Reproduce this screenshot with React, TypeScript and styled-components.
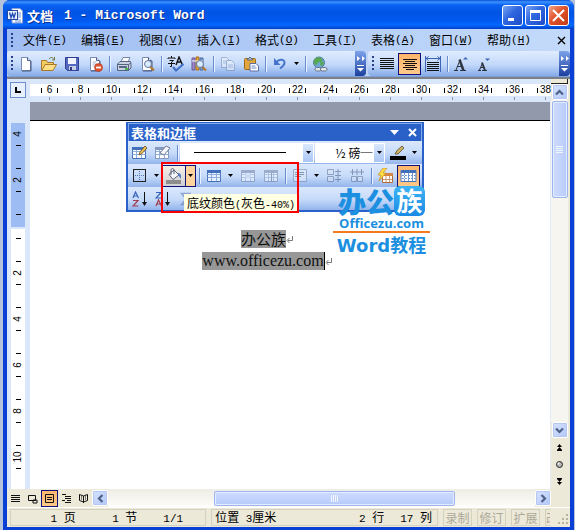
import React from "react";
import styled, { createGlobalStyle, css } from "styled-components";

const song = `"Noto Sans CJK SC", sans-serif`;
const mono = `"Liberation Mono", monospace`;

const GlobalStyle = createGlobalStyle`
  * { box-sizing: border-box; }
  body { margin: 0; background: #b4c2dc; font-family: ${song}; font-size: 12px; color: #000; }
  button, select { font: inherit; color: inherit; margin: 0; padding: 0; border: 0; background: none; }
  button { display: inline-flex; align-items: center; justify-content: center; flex: none; }
  svg { display: block; flex: none; }
`;

/* ---------- window frame ---------- */

const Desktop = styled.div`
  display: flex;
  min-height: 100vh;
  padding: 0 1px 0 3px;
`;

const Window = styled.main`
  display: flex;
  flex: 1;
  flex-direction: column;
  min-width: 0;
  border: solid #0a3fd6;
  border-width: 0 4px 3px;
  border-radius: 7px 7px 0 0;
  background: #0a3fd6;
`;

const TitleBar = styled.header`
  display: flex;
  align-items: center;
  height: 29px;
  margin: 0 -4px;
  padding: 2px 5px 0 4px;
  border-radius: 7px 7px 0 0;
  background: linear-gradient(#0a50d8 0, #3c93ff 2px, #0a62f2 5px, #0054e3 12px, #0058ee 20px, #0468ff 25px, #0040c8 29px);
`;

const Title = styled.h1`
  display: flex;
  flex: 1;
  align-items: center;
  gap: 11px;
  margin: 0 0 0 4px;
  font-size: 13px;
  line-height: 18px;
  font-weight: 700;
  color: #fff;
  text-shadow: 1px 1px 0 #0a2f8c;
  white-space: pre;
`;

const TitleLatin = styled.span`
  font-family: ${mono};
`;

const CaptionButton = styled.button<{ $close?: boolean }>`
  width: 21px;
  height: 21px;
  margin-left: 2px;
  border: 1px solid #fff;
  border-radius: 3px;
  background: ${(p) =>
    p.$close
      ? "linear-gradient(135deg, #f0a488, #e0532c 45%, #c23a14)"
      : "linear-gradient(135deg, #7ba4f4, #2f66e0 45%, #1c4cc8)"};
`;

/* ---------- menu and toolbars ---------- */

const Latin = styled.span<{ $small?: boolean }>`
  font-family: ${mono};
  font-size: ${(p) => (p.$small ? "10px" : "11px")};
`;

const MenuBar = styled.nav`
  display: flex;
  align-items: center;
  height: 22px;
  padding-left: 4px;
  background: linear-gradient(90deg, #9fbdf2, #c3dafa);
`;

const MenuButton = styled.button`
  justify-content: flex-start;
  width: 58px;
  height: 20px;
  line-height: 18px;
  white-space: nowrap;
`;

const Grip = styled.span`
  flex: none;
  width: 2px;
  height: 14px;
  margin-right: 10px;
  background: repeating-linear-gradient(#27408b 0 2px, transparent 2px 4px);
`;

const ToolGrip = styled(Grip)`
  height: 15px;
  margin-right: 1px;
`;

const Spacer = styled.span<{ $fixed?: boolean }>`
  flex: ${(p) => (p.$fixed ? "0 0 24px" : "1")};
`;

const ToolbarRow = styled.div`
  display: flex;
  gap: 2px;
  height: 26px;
  background: #bcd2f7;
  border-bottom: 1px solid #7f9fd8;
`;

const Toolbar = styled.div<{ $grow?: boolean }>`
  display: flex;
  flex: ${(p) => (p.$grow ? "1" : "none")};
  align-items: center;
  padding-left: 4px;
  border-radius: 4px;
  background: linear-gradient(#e0ecfe, #c2d8fa 55%, #86abe8);
`;

const selected = css`
  background: linear-gradient(#ffb56a, #ffc98a);
  outline: 1px solid #10107a;
  outline-offset: -1px;
`;

const ToolButton = styled.button<{ $on?: boolean; $dim?: boolean }>`
  width: 23px;
  height: 22px;
  ${(p) => p.$on && selected}
  svg {
    opacity: ${(p) => (p.$dim ? 0.5 : 1)};
  }
`;

const ArrowButton = styled.button`
  width: 11px;
  height: 22px;
`;

const Separator = styled.span`
  flex: none;
  width: 1px;
  height: 16px;
  margin: 0 2px 0 3px;
  background: #6a8ccb;
  box-shadow: 1px 0 0 #e9f2ff;
`;

const OverflowButton = styled.button`
  flex-direction: column;
  gap: 4px;
  width: 11px;
  height: 25px;
  border-radius: 0 4px 4px 0;
  background: linear-gradient(#7da3ea, #1c3f9e);
`;

/* ---------- document area ---------- */

const Workspace = styled.section`
  display: grid;
  flex: 1;
  grid-template-columns: 23px minmax(0, 1fr) 19px;
  grid-template-rows: 23px minmax(0, 1fr) 18px;
  border-top: 2px solid #7c8088;
  background: #dae6fa;
`;

const Corner = styled.div`
  display: flex;
  padding: 3px 4px 4px 3px;
`;

const TabStop = styled.button`
  width: 16px;
  height: 16px;
  border: 1px solid #6e8fcb;
  background: #e6effc;
`;

const RulerArea = styled.div`
  padding-top: 5px;
  overflow: hidden;
`;

const Ruler = styled.div`
  display: flex;
  height: 12px;
  padding-left: 4px;
  background: #fff;
`;

const RulerCell = styled.span`
  display: flex;
  flex: none;
  align-items: center;
  justify-content: space-between;
  width: 31px;
  height: 12px;
  padding: 0 7px;
  font: 10px/12px "Liberation Sans", sans-serif;
  &::before,
  &::after {
    content: "";
    width: 1px;
    height: 5px;
    background: #000;
  }
`;

const TabTicks = styled.div`
  height: 3px;
  margin: 1px 0 0 4px;
  background: repeating-linear-gradient(90deg, transparent 0 15px, #8b94a8 15px 16px, transparent 16px 31px);
`;

const SideRuler = styled.div`
  height: 0;
  min-height: 100%;
  margin: 0 5px 0 4px;
  padding-top: 21px;
  overflow: hidden;
`;

const SideZone = styled.div<{ $margin?: boolean }>`
  height: ${(p) => (p.$margin ? "104px" : "100%")};
  margin-bottom: 2px;
  overflow: hidden;
  background: ${(p) => (p.$margin ? "#9dbcf3" : "#fff")};
`;

const SideCell = styled.span<{ $cut?: "top" | "half" }>`
  display: flex;
  flex-direction: column;
  align-items: center;
  justify-content: space-between;
  height: 46px;
  margin-top: ${(p) => (p.$cut === "top" ? "-12px" : p.$cut === "half" ? "-25px" : "0")};
  padding: 11px 0;
  font: 10px/12px "Liberation Sans", sans-serif;
  &::before,
  &::after {
    content: "";
    width: 5px;
    height: 1px;
    background: #000;
  }
`;

const SideNumber = styled.span`
  height: 12px;
  transform: rotate(-90deg);
`;

const PageView = styled.div`
  position: relative;
  display: flex;
  flex-direction: column;
  background: #fff;
  border-right: 1px solid #e4ebf8;
`;

const PageGap = styled.div`
  height: 19px;
  background: #9299ab;
  border-bottom: 1px solid #000;
`;

const PageText = styled.article`
  display: flex;
  flex-direction: column;
  align-items: center;
  gap: 4px;
  padding: 109px 46px 0 0;
`;

const Line = styled.p<{ $latin?: boolean }>`
  display: flex;
  align-items: center;
  margin: 0;
  font-family: ${(p) => (p.$latin ? `"Liberation Serif", serif` : song)};
  font-size: ${(p) => (p.$latin ? "16px" : "15px")};
  line-height: 19px;
  color: #111;
`;

const Mark = styled.mark<{ $caret?: boolean }>`
  height: 18px;
  line-height: 18px;
  background: #979797;
  color: inherit;
  border-right: ${(p) => (p.$caret ? "1px solid #000" : "0")};
`;

/* ---------- scroll bars ---------- */

const VScroll = styled.div`
  display: flex;
  grid-row: 1 / 4;
  grid-column: 3;
  flex-direction: column;
  align-items: center;
  padding-right: 2px;
  background: #ece9d8;
`;

const SplitBox = styled.div`
  align-self: stretch;
  height: 5px;
  background: #ece9d8;
  border: solid #222;
  border-width: 0 1px 1px 0;
`;

const ScrollButton = styled.button`
  width: 16px;
  height: 16px;
  border: 1px solid #fff;
  border-radius: 2px;
  background: linear-gradient(135deg, #d6e2fe, #b2c7fa);
  box-shadow: inset 0 0 0 1px #b4c6f2;
`;

const VTrack = styled.div`
  display: flex;
  flex: 1;
  align-self: stretch;
  justify-content: center;
  padding-top: 1px;
  background: #f6f5ef;
`;

const Thumb = styled.div<{ $horizontal?: boolean }>`
  display: flex;
  align-items: center;
  justify-content: center;
  width: ${(p) => (p.$horizontal ? "60%" : "16px")};
  height: ${(p) => (p.$horizontal ? "15px" : "97px")};
  border: 1px solid #9db4ee;
  border-radius: 2px;
  background: ${(p) => (p.$horizontal ? "linear-gradient(#cddbff, #b7cafa)" : "linear-gradient(90deg, #cfdcff, #b7cafa)")};
  box-shadow: inset 0 0 0 1px #e4ecff;
`;

const BrowseButtons = styled.div`
  display: flex;
  flex-direction: column;
  justify-content: space-between;
  height: 69px;
  padding: 3px 0 20px;
`;

const BrowseButton = styled.button`
  width: 15px;
  height: 12px;
`;

const HBar = styled.div`
  display: flex;
  grid-column: 1 / 3;
  align-items: center;
  background: #ece9d8;
`;

const ViewButton = styled.button<{ $on?: boolean }>`
  width: 17px;
  height: 17px;
  ${(p) => p.$on && selected}
`;

const HTrack = styled.div`
  display: flex;
  flex: 1;
  align-items: center;
  justify-content: center;
  height: 18px;
  padding-left: 26px;
  background: linear-gradient(#eeede5, #fdfdfa);
`;

/* ---------- status bar ---------- */

const StatusBar = styled.footer`
  display: flex;
  align-items: center;
  gap: 5px;
  height: 20px;
  padding: 0 0 0 3px;
  border-top: 1px solid #fff;
  background: #ece9d8;
`;

const Panel = styled.div<{ $wide?: number; $dim?: boolean; $last?: boolean }>`
  display: flex;
  flex: ${(p) => (p.$wide ? `${p.$wide} 1 0` : p.$last ? "0 0 6px" : "0 0 29px")};
  gap: 16px;
  align-items: center;
  justify-content: ${(p) => (p.$dim ? (p.$last ? "flex-start" : "center") : "flex-end")};
  height: 17px;
  padding: ${(p) => (p.$dim ? "0" : "0 5px 0 3px")};
  overflow: hidden;
  border: 1px solid #d5d1bf;
  border-right-color: ${(p) => (p.$last ? "transparent" : "#d5d1bf")};
  color: ${(p) => (p.$dim ? "#aca899" : "#000")};
  line-height: 15px;
  white-space: pre;
`;

const Counters = styled(Panel)`
  gap: 0;
  padding-right: 22px;
`;

const Counter = styled.span<{ $short?: boolean }>`
  width: ${(p) => (p.$short ? "46px" : "62px")};
  text-align: right;
`;

/* ---------- floating palette ---------- */

const Palette = styled.section`
  position: absolute;
  top: 20px;
  left: 96px;
  width: 298px;
  border: 2px solid #2a61c9;
  border-top-width: 1px;
  background: #2a61c9;
`;

const PaletteTitle = styled.header`
  display: flex;
  align-items: center;
  height: 18px;
  padding-left: 2px;
  border: solid #86abea;
  border-width: 1px 1px 0;
  color: #fff;
`;

const PaletteHeading = styled.h2`
  flex: 1;
  margin: 0;
  font-size: 13px;
  line-height: 17px;
`;

const PaletteButton = styled.button`
  width: 18px;
  height: 16px;
`;

const PaletteRow = styled.div`
  display: flex;
  align-items: center;
  height: 23px;
  background: linear-gradient(#dbe8fd, #c5daf9 55%, #93b4ec);
`;

const Combo = styled.label<{ $wide?: boolean }>`
  position: relative;
  display: flex;
  flex: none;
  align-items: center;
  width: ${(p) => (p.$wide ? "134px" : "70px")};
  height: 20px;
  margin-right: 1px;
  background: #fff;
`;

const ComboSelect = styled.select`
  flex: 1;
  width: 100%;
  height: 20px;
  padding-left: 20px;
  appearance: none;
  line-height: 18px;
`;

const ComboArrow = styled.span`
  position: absolute;
  top: 1px;
  right: 1px;
  display: flex;
  align-items: center;
  justify-content: center;
  width: 10px;
  height: 18px;
  background: linear-gradient(#dbe8fd, #a9c5f3);
  pointer-events: none;
`;

const ComboSample = styled.svg`
  position: absolute;
  left: 14px;
  pointer-events: none;
`;

const FillSplit = styled.span`
  display: flex;
  flex: none;
  outline: 1px solid #10107a;
  outline-offset: -1px;
  background: linear-gradient(#f6f0e6, #cfcdd2);
`;

const FillArrow = styled(ArrowButton)`
  border: solid #10107a;
  border-width: 1px 1px 1px 1px;
  background: #ffd49c;
`;

const Highlight = styled.div`
  position: absolute;
  top: 60px;
  left: 131px;
  width: 138px;
  height: 51px;
  border: 2px solid #f80000;
  pointer-events: none;
`;

const Tooltip = styled.div`
  position: absolute;
  top: 92px;
  left: 154px;
  width: 113px;
  height: 17px;
  padding-left: 3px;
  background: #ffffe1;
  line-height: 17px;
  white-space: nowrap;
`;

/* ---------- site badge ---------- */

const Badge = styled.aside`
  position: absolute;
  top: 84px;
  left: 303px;
  display: flex;
  flex-direction: column;
  align-items: center;
  width: 97px;
  color: #1c8fe0;
`;

const BadgeName = styled.div`
  display: flex;
  align-items: center;
  height: 30px;
  font-size: 28px;
  line-height: 28px;
  font-weight: 900;
`;

const BadgeTile = styled.span`
  width: 31px;
  height: 30px;
  border-radius: 6px;
  background: linear-gradient(#3db4f5, #1a8ae4);
  color: #fff;
  font-size: 26px;
  font-weight: 700;
  text-align: center;
`;

const BadgeSite = styled.div`
  height: 14px;
  font: 700 13px/14px "Open Sans", sans-serif;
  text-shadow: 1px 0 0 #fff, -1px 0 0 #fff;
`;

const BadgeRule = styled.div`
  align-self: stretch;
  height: 2px;
  margin: 1px 0 2px;
  background: #f47a20;
`;

const BadgeTopic = styled.div`
  font: 700 18px/22px "DejaVu Sans", "Noto Sans CJK SC", sans-serif;
`;

/* ---------- drawings ---------- */

type Kids = { children?: React.ReactNode; w?: number; h?: number };
const Icon = ({ children, w = 16, h = 16 }: Kids) => (
  <svg width={w} height={h} viewBox={`0 0 ${w} ${h}`} fill="none" aria-hidden="true">
    {children}
  </svg>
);

const Down = ({ color = "#000", big = false }: { color?: string; big?: boolean }) =>
  big ? (
    <Icon w={9} h={5}><path d="M0 0h9L4.5 5z" fill={color} /></Icon>
  ) : (
    <Icon w={5} h={3}><path d="M0 0h5L2.5 3z" fill={color} /></Icon>
  );

const Cross = ({ color = "#000", size = 9, weight = 2 }: { color?: string; size?: number; weight?: number }) => (
  <Icon w={size} h={size}>
    <path d={`M1 1L${size - 1} ${size - 1}M${size - 1} 1L1 ${size - 1}`} stroke={color} strokeWidth={weight} />
  </Icon>
);

const Chevron = ({ turn }: { turn: number }) => (
  <Icon w={9} h={9}>
    <path d="M1 6.5L4.5 3L8 6.5" stroke="#4d6185" strokeWidth="2.2" transform={`rotate(${turn} 4.5 4.5)`} />
  </Icon>
);

const Overflow = () => (
  <OverflowButton aria-label="工具栏选项">
    <Icon w={8} h={5}><path d="M0 0l3 2.5L0 5zM5 0l3 2.5L5 5z" fill="#fff" /></Icon>
    <Icon w={7} h={7}><path d="M0 0h7v1H0zM0 3h7L3.5 6.5z" fill="#fff" /></Icon>
  </OverflowButton>
);

const WordLogo = () => (
  <Icon>
    <path d="M5 .5h8l2.5 2.5v12H5z" fill="#fff" stroke="#8da3d4" />
    <path d="M11 5h3M11 7h3M11 9h3M8 12h6M8 14h6" stroke="#6d8fd6" />
    <rect x=".5" y="2.5" width="10" height="9" fill="#eaf1ff" stroke="#23489c" />
    <path d="M2.5 4.5L4 9.5l1.5-4 1.5 4 1.5-5" stroke="#2450b4" strokeWidth="1.4" />
  </Icon>
);

const Sheet = () => (
  <>
    <path d="M3.5 1.5h6l3 3v10h-9z" fill="#fff" stroke="#7a8cb4" />
    <path d="M9.5 1.5v3h3" fill="#dfe8f8" stroke="#4a5c88" />
    <path d="M13 5v10H4" stroke="#46577f" />
  </>
);

const NewDoc = () => <Icon><Sheet /></Icon>;
const OpenFolder = () => (
  <Icon>
    <path d="M.5 14V4.500h5l1 2h6v2" fill="#f3cf63" stroke="#a8792a" />
    <path d="M.8 14.500L4 8.500h11.500L12 14.500z" fill="#ffdf85" stroke="#a8792a" />
    <path d="M8 3c2-2.500 4-1.500 5 .5M13.500 1v3H11" stroke="#6c7b3f" />
  </Icon>
);
const Save = () => (
  <Icon>
    <path d="M1.500 1.500h13v13h-11l-2-2z" fill="#5468c0" stroke="#333f94" />
    <path d="M4 2h8v6H4z" fill="#f2f5ff" />
    <path d="M5 10h7v4H5z" fill="#c7cfe8" /><path d="M6 11h2v3H6z" fill="#303a7c" />
  </Icon>
);
const Permission = () => (
  <Icon>
    <Sheet /><path d="M5.500 6h4M5.500 8h4M5.500 10h2" stroke="#a8b4cd" />
    <circle cx="11.500" cy="11.500" r="4" fill="#e0522f" stroke="#b3361a" strokeWidth=".6" />
    <path d="M9 11.500h5" stroke="#fff" strokeWidth="1.800" />
  </Icon>
);
const Print = () => (
  <Icon>
    <path d="M5 6L7 1.500h7L12 6z" fill="#fff" stroke="#7887a7" />
    <path d="M1.500 8L4 5.500h10.500L15 8v4l-2.500 2.500h-11z" fill="#c9d2e0" stroke="#566480" />
    <path d="M1.500 8.500h11L15 7M12.500 8.500v6" stroke="#566480" />
    <path d="M3 10h8v2H3z" fill="#5b6a86" /><path d="M9 12h3v2H9z" fill="#4fb84b" />
  </Icon>
);
const Lens = ({ x = 8, y = 8 }: { x?: number; y?: number }) => (
  <>
    <path d={`M${x + 2} ${y + 2.5}l4 4`} stroke="#b3772d" strokeWidth="2.200" />
    <circle cx={x} cy={y} r="3.500" fill="#d8ecff" stroke="#66779b" />
  </>
);
const Preview = () => <Icon><Sheet /><Lens x={9} y={8} /></Icon>;
const Spell = () => (
  <Icon w={18}>
    <path d="M1 3V2h7v1M4.500 0v2M2.500 4.500h4L4.500 6v4.500H3M1 7.500h7" stroke="#111" />
    <path d="M9 9l3-8 3.500 8M10 6h4.500" stroke="#111" strokeWidth="1.400" />
    <path d="M6 11l3 3.500L16.500 8" stroke="#3f6fc4" strokeWidth="2" />
  </Icon>
);
const Research = () => (
  <Icon>
    <path d="M1 2h3v12H1z" fill="#9c88cc" stroke="#6a579d" /><path d="M5 1h3v13H5z" fill="#e4a53b" stroke="#a56e1c" />
    <path d="M9 2h3v12H9z" fill="#7da7dc" stroke="#48699c" /><path d="M1 5h11" stroke="#fff" /><Lens x={9} y={8} />
  </Icon>
);
const Copy = () => (
  <Icon>
    <path d="M1.500 1.500h5l3 3v7h-8z" fill="#f2f6fd" stroke="#7386ab" />
    <path d="M6.500 4.500h5l3 3v7h-8z" fill="#f2f6fd" stroke="#7386ab" />
    <path d="M8 9h5M8 11h5M3 5h3M3 7h3" stroke="#8fa0c3" />
  </Icon>
);
const Paste = () => (
  <Icon>
    <rect x="1.500" y="2.500" width="11" height="11" rx="1" fill="#e2a63a" stroke="#9c6a18" />
    <path d="M4.500 4V2.500h1.500L7 1l1 1.500h1.500V4z" fill="#ccd3de" stroke="#5b6579" />
    <path d="M7 7.500h6l2.500 2.500v5H7z" fill="#fff" stroke="#5a6f9f" /><path d="M8.500 10h4M8.500 12h5" stroke="#6b88c7" />
  </Icon>
);
const Undo = () => (
  <Icon w={14}>
    <path d="M3.500 6C6 2.500 12 3 11.500 7c-.3 2.500-2 4-4.500 5.500" stroke="#4673cc" strokeWidth="2" />
    <path d="M1 2v7h6.500z" fill="#4673cc" />
  </Icon>
);
const Globe = () => (
  <Icon>
    <circle cx="7" cy="6.500" r="5.500" fill="#6da7d8" stroke="#4b7f9b" />
    <path d="M2 4c2-3.500 6-3.500 8-1s-1 3-3 3-1 3-2.500 3S1 7 2 4zM8.500 6l3.500 0-1.500 4-2.500-1z" fill="#58a852" />
    <rect x="3" y="11.500" width="6" height="3.500" rx="1.700" fill="#dfe5ee" stroke="#6b7687" />
    <rect x="8.500" y="11.500" width="6.500" height="3.500" rx="1.700" fill="#dfe5ee" stroke="#6b7687" />
  </Icon>
);
const Lines = ({ center = false }: { center?: boolean }) => (
  <Icon>
    <path
      d={center ? "M1 3.500h14M3 5.500h10M1 7.500h14M3 9.500h10M1 11.500h14M4 13.500h8" : "M1 2.500h14M1 4.500h14M1 6.500h14M1 8.500h14M1 10.500h14M1 12.500h14"}
      stroke="#111"
    />
  </Icon>
);
const Distribute = () => (
  <Icon>
    <path d="M1 2.500h14M3.500.5l-2.500 2 2.500 2M12.500.5l2.500 2-2.500 2" stroke="#3e65b4" />
    <path d="M.5 0v16M15.500 0v16" stroke="#3e65b4" /><path d="M2 6.500h12M2 8.500h12M2 10.500h12M2 12.500h12M2 14.500h12" stroke="#111" />
  </Icon>
);
const FontStep = ({ up = false }: { up?: boolean }) => (
  <Icon>
    {up ? (
      <>
        <path d="M0 14.500h4M6 14.500h6M2 14L6 4M3.500 10.500h5" stroke="#2d3440" />
        <path d="M5.500 3.500l4 11" stroke="#2d3440" strokeWidth="2.400" />
      </>
    ) : (
      <>
        <path d="M1 14.500h3M5 14.500h5M2.500 14L5.500 7M3.500 11.500h4" stroke="#2d3440" />
        <path d="M5 6.500l3 8" stroke="#2d3440" strokeWidth="2" />
      </>
    )}
    <path d={up ? "M9 3.500L11.500 1 14 3.500z" : "M8 2.500h5L10.500 5z"} fill="#3e65b4" />
  </Icon>
);

const Grid = ({ color = "#4270bd", fill = "#fff" }: { color?: string; fill?: string }) => (
  <>
    <path d="M1.500 2.500h13v11h-13z" fill={fill} stroke={color} />
    <path d="M1.500 6.500h13M1.500 9.500h13M5.500 4v9M10.500 4v9" stroke="#8fadd9" />
    <path d="M1 2h14v3H1z" fill={color} />
  </>
);
const PencilTable = () => (
  <Icon w={17}><Grid /><path d="M8 10l1-3 5-6 2 2-5.500 6z" fill="#eebf53" stroke="#6a4a1f" strokeWidth=".8" /></Icon>
);
const EraserTable = () => (
  <Icon w={17}><Grid color="#8499bf" /><path d="M6 8l6-7 4 2-6 7z" fill="#f5f7fb" stroke="#66708a" strokeWidth=".9" /></Icon>
);
const Borders = () => (
  <Icon w={13} h={13}>
    <rect x=".5" y=".5" width="12" height="12" stroke="#222" />
    <path d="M6.500 2v10M2 6.500h10" stroke="#4f74b8" strokeDasharray="1 1" />
  </Icon>
);
const Bucket = () => (
  <Icon w={17}>
    <path d="M4 6.500L9 2l5 5-6 4.500z" fill="#f4f6fa" stroke="#59637c" /><path d="M13 5c3 0 3.500 3 2.500 6l-2-4" fill="#4b78c6" />
    <path d="M6 7V2c0-2 3-2 3 0v4" stroke="#59637c" /><path d="M1 12h15v4H1z" fill="#8d8d8d" />
  </Icon>
);
const TableIcon = () => <Icon><Grid fill="#e8f1ff" /></Icon>;
const MergeCells = () => <Icon><Grid color="#687ba0" /><path d="M5 6h6v4H5z" fill="#cdd8eb" /></Icon>;
const SplitCells = () => <Icon><Grid color="#687ba0" /><path d="M8.500 5v9" stroke="#56668c" /></Icon>;
const AlignCell = () => (
  <Icon><path d="M1.500 1.500h13v12h-13z" fill="#e5edfa" stroke="#6b7da3" /><path d="M3 4.500h9M3 6.500h9M3 8.500h6" stroke="#44506c" /></Icon>
);
const EvenRows = () => (
  <Icon>
    <path d="M1.500 1.500h6v5h-6zM1.500 8.500h6v5h-6z" fill="#d9e4f6" stroke="#56688f" />
    <path d="M9 3.500h6M9 11.500h6M12 1v13M9 7.500h6" stroke="#3f5178" />
  </Icon>
);
const EvenCols = () => (
  <Icon>
    <path d="M2.500 8.500h5v5h-5zM8.500 8.500h5v5h-5z" fill="#d9e4f6" stroke="#56688f" />
    <path d="M3.500 1v6M8 1v6M12.500 1v6M1 4h14" stroke="#3f5178" />
  </Icon>
);
const AutoFormat = () => (
  <Icon w={17}>
    <path d="M5.500 5.500h10v9h-10z" fill="#fff" stroke="#b86a35" /><path d="M5 5h11v3H5z" fill="#d88442" />
    <path d="M6 11.500h9M9 8v6M12.500 8v6" stroke="#c99a78" /><path d="M6 0L1 7h3l-2 6 7-8H6l4-5z" fill="#ffdf45" stroke="#c4891f" strokeWidth=".7" />
  </Icon>
);
const ShowGrid = () => (
  <Icon w={17}>
    <path d="M1 2.500h15v11H1z" fill="#fff" stroke="#4270bd" /><path d="M1 2h15v3H1z" fill="#4270bd" />
    <path d="M2 7.500h14M2 10.500h14M4.500 5v9M8.500 5v9M12.500 5v9" stroke="#6f96d3" strokeDasharray="2 1" />
  </Icon>
);
const PenColor = () => (
  <Icon w={18}>
    <path d="M6 9l2-3.500L13 1l2 2-6 6z" fill="#ccb262" stroke="#5a4a26" strokeWidth=".8" /><path d="M1 11h16v4H1z" fill="#000" />
  </Icon>
);
const Sort = ({ down = false }: { down?: boolean }) => {
  const a = "M1 7L3.500 1l3 6M2 5h3.500";
  const z = "M1 9.500h5l-5 5.500h5.500";
  return (
    <Icon>
      <path d={a} stroke={down ? "#a43c4e" : "#3763b8"} strokeWidth="1.200" transform={down ? "translate(0 8)" : undefined} />
      <path d={z} stroke={down ? "#3763b8" : "#a43c4e"} strokeWidth="1.200" transform={down ? "translate(0 -8)" : undefined} />
      <path d="M12.500 1v12" stroke="#111" /><path d="M10 11h5L12.500 15z" fill="#111" />
    </Icon>
  );
};
const Sum = () => <Icon><path d="M12 4V2.500H3.500L8 8l-4.500 5.500H12V12" stroke="#4a68a5" strokeWidth="1.400" /></Icon>;
const Return = () => (
  <Icon w={7} h={9}><path d="M6.500 1v4.500H2M3.500 3L1 5.500 3.500 8" stroke="#777" /></Icon>
);

const viewPaths: { label: string; on?: boolean; d: string }[] = [
  { label: "普通视图", d: "M1 2.500h9M1 4.500h9M1 6.500h9M1 8.500h9" },
  { label: "Web 版式视图", d: "M1.500 2.500h7v5h-7zM6 7h4v3H6z" },
  { label: "页面视图", on: true, d: "M1.500 1.500h8v8h-8zM3 4.500h5M3 6.500h5" },
  { label: "大纲视图", d: "M1 1.500h4M4 3.500h6M4 5.500h6M1 7.500h3M6 7.500h4M4 9.500h6" },
  { label: "阅读版式", d: "M1.500 1.500L5.500 3l4-1.500v6L5.500 9l-4-1.500zM5.500 3v7M3 4h1M3 6h1M7 4h1M7 6h1" },
];

const menus: [string, string][] = [
  ["文件", "F"], ["编辑", "E"], ["视图", "V"], ["插入", "I"], ["格式", "O"],
  ["工具", "T"], ["表格", "A"], ["窗口", "W"], ["帮助", "H"],
];

const rulerNumbers = Array.from({ length: 17 }, (_, i) => 6 + i * 2);

const Tool = ({ label, on, dim, children }: { label: string; on?: boolean; dim?: boolean; children: React.ReactNode }) => (
  <ToolButton aria-label={label} aria-pressed={on} $on={on} $dim={dim}>{children}</ToolButton>
);

const Arrow = ({ label }: { label: string }) => <ArrowButton aria-label={label}><Down /></ArrowButton>;

const BordersPalette = () => (
  <Palette aria-label="表格和边框">
    <PaletteTitle>
      <PaletteHeading>表格和边框</PaletteHeading>
      <PaletteButton aria-label="工具栏选项"><Down big color="#fff" /></PaletteButton>
      <PaletteButton aria-label="关闭"><Cross color="#fff" size={9} /></PaletteButton>
    </PaletteTitle>
    <PaletteRow>
      <Tool label="绘制表格"><PencilTable /></Tool>
      <Tool label="擦除"><EraserTable /></Tool>
      <Separator />
      <Combo $wide>
        <ComboSelect aria-label="线型"><option aria-label="单实线" /></ComboSelect>
        <ComboSample width="92" height="1" aria-hidden="true"><path d="M0 0h92v1H0z" /></ComboSample>
        <ComboArrow><Down /></ComboArrow>
      </Combo>
      <Combo>
        <ComboSelect aria-label="粗细"><option>½ 磅─</option></ComboSelect>
        <ComboArrow><Down /></ComboArrow>
      </Combo>
      <Tool label="边框颜色"><PenColor /></Tool>
      <Arrow label="边框颜色列表" />
    </PaletteRow>
    <PaletteRow>
      <Tool label="外侧框线"><Borders /></Tool>
      <Arrow label="框线列表" />
      <FillSplit>
        <Tool label="底纹颜色"><Bucket /></Tool>
        <FillArrow aria-label="底纹颜色列表"><Down /></FillArrow>
      </FillSplit>
      <Separator />
      <Tool label="插入表格"><TableIcon /></Tool>
      <Arrow label="插入列表" />
      <Tool label="合并单元格" dim><MergeCells /></Tool>
      <Tool label="拆分单元格" dim><SplitCells /></Tool>
      <Separator />
      <Tool label="对齐方式" dim><AlignCell /></Tool>
      <Arrow label="对齐列表" />
      <Tool label="平均分布各行" dim><EvenRows /></Tool>
      <Tool label="平均分布各列" dim><EvenCols /></Tool>
      <Separator />
      <Tool label="自动套用格式"><AutoFormat /></Tool>
      <Tool label="显示虚框" on><ShowGrid /></Tool>
    </PaletteRow>
    <PaletteRow>
      <Tool label="升序排序"><Sort /></Tool>
      <Tool label="降序排序"><Sort down /></Tool>
      <Tool label="自动求和" dim><Sum /></Tool>
    </PaletteRow>
  </Palette>
);

export default function App() {
  return (
    <Desktop>
      <GlobalStyle />
      <Window>
        <TitleBar>
          <WordLogo />
          <Title>文档<TitleLatin>1 - Microsoft Word</TitleLatin></Title>
          <CaptionButton aria-label="最小化"><Icon w={13} h={13}><path d="M2 9h6v3H2z" fill="#fff" /></Icon></CaptionButton>
          <CaptionButton aria-label="最大化">
            <Icon w={13} h={13}><path d="M1.500 2.500h10v9h-10z" stroke="#fff" /><path d="M1 1h11v3H1z" fill="#fff" /></Icon>
          </CaptionButton>
          <CaptionButton aria-label="关闭" $close><Cross color="#fff" size={13} /></CaptionButton>
        </TitleBar>

        <MenuBar>
          <Grip />
          {menus.map(([name, key]) => (
            <MenuButton key={key}>{name}<Latin>(<u>{key}</u>)</Latin></MenuButton>
          ))}
          <Spacer />
          <PaletteButton aria-label="关闭文档"><Cross weight={1.4} /></PaletteButton>
        </MenuBar>

        <ToolbarRow>
          <Toolbar>
            <ToolGrip />
            <Tool label="新建"><NewDoc /></Tool>
            <Tool label="打开"><OpenFolder /></Tool>
            <Tool label="保存"><Save /></Tool>
            <Tool label="权限"><Permission /></Tool>
            <Separator />
            <Tool label="打印"><Print /></Tool>
            <Tool label="打印预览"><Preview /></Tool>
            <Separator />
            <Tool label="拼写和语法"><Spell /></Tool>
            <Tool label="信息检索"><Research /></Tool>
            <Separator />
            <Tool label="复制" dim><Copy /></Tool>
            <Tool label="粘贴"><Paste /></Tool>
            <Separator />
            <Tool label="撤消"><Undo /></Tool>
            <Arrow label="撤消列表" />
            <Separator />
            <Tool label="超链接"><Globe /></Tool>
            <Spacer $fixed />
            <Overflow />
          </Toolbar>
          <Toolbar $grow>
            <ToolGrip />
            <Tool label="两端对齐"><Lines /></Tool>
            <Tool label="居中" on><Lines center /></Tool>
            <Tool label="分散对齐"><Distribute /></Tool>
            <Separator />
            <Tool label="增大字体"><FontStep up /></Tool>
            <Tool label="缩小字体"><FontStep /></Tool>
            <Spacer />
            <Overflow />
          </Toolbar>
        </ToolbarRow>

        <Workspace>
          <Corner>
            <TabStop aria-label="制表位"><Icon w={8} h={8}><path d="M1 1h2v4h4v2H1z" fill="#000" /></Icon></TabStop>
          </Corner>
          <RulerArea>
            <Ruler>{rulerNumbers.map((n) => <RulerCell key={n}>{n}</RulerCell>)}</Ruler>
            <TabTicks />
          </RulerArea>
          <VScroll>
            <SplitBox />
            <ScrollButton aria-label="向上滚动"><Chevron turn={0} /></ScrollButton>
            <VTrack>
              <Thumb>
                <Icon w={7} h={8}><path d="M0 .5h7M0 2.500h7M0 4.500h7M0 6.500h7" stroke="#f2f6ff" /></Icon>
              </Thumb>
            </VTrack>
            <ScrollButton aria-label="向下滚动"><Chevron turn={180} /></ScrollButton>
            <BrowseButtons>
              <BrowseButton aria-label="前一页"><Icon w={5} h={7}><path d="M0 3h5L2.500 0zM0 6h5L2.500 3zM0 6h5v1H0z" fill="#000" /></Icon></BrowseButton>
              <BrowseButton aria-label="选择浏览对象"><Icon w={7} h={7}><circle cx="3.500" cy="3.500" r="3" fill="#b5b5b5" stroke="#222" /><circle cx="2.500" cy="2.500" r="1" fill="#fff" /></Icon></BrowseButton>
              <BrowseButton aria-label="下一页"><Icon w={5} h={7}><path d="M0 0h5v1H0zM0 1h5L2.500 4zM0 4h5L2.500 7z" fill="#000" /></Icon></BrowseButton>
            </BrowseButtons>
          </VScroll>

          <SideRuler>
            <SideZone $margin>
              <SideCell $cut="top"><SideNumber>4</SideNumber></SideCell>
              <SideCell><SideNumber>2</SideNumber></SideCell>
              <SideCell><SideNumber /></SideCell>
            </SideZone>
            <SideZone>
              <SideCell $cut="half"><SideNumber /></SideCell>
              {[2, 4, 6, 8, 10].map((n) => <SideCell key={n}><SideNumber>{n}</SideNumber></SideCell>)}
            </SideZone>
          </SideRuler>

          <PageView>
            <PageGap />
            <PageText>
              <Line><Mark>办公族</Mark><Return /></Line>
              <Line $latin><Mark $caret>www.officezu.com</Mark><Return /></Line>
            </PageText>
            <BordersPalette />
            <Tooltip role="tooltip">底纹颜色<Latin $small>(</Latin>灰色<Latin $small>-40%)</Latin></Tooltip>
            <Highlight />
            <Badge>
              <BadgeName>办公<BadgeTile>族</BadgeTile></BadgeName>
              <BadgeSite>Officezu.com</BadgeSite>
              <BadgeRule />
              <BadgeTopic>Word教程</BadgeTopic>
            </Badge>
          </PageView>

          <HBar>
            {viewPaths.map((v) => (
              <ViewButton key={v.label} aria-label={v.label} aria-pressed={v.on} $on={v.on}>
                <Icon w={11} h={11}><path d={v.d} stroke="#111" /></Icon>
              </ViewButton>
            ))}
            <ScrollButton aria-label="向左滚动"><Chevron turn={-90} /></ScrollButton>
            <HTrack>
              <Thumb $horizontal>
                <Icon w={8} h={7}><path d="M.5 0v7M2.500 0v7M4.500 0v7M6.500 0v7" stroke="#f2f6ff" /></Icon>
              </Thumb>
            </HTrack>
            <ScrollButton aria-label="向右滚动"><Chevron turn={90} /></ScrollButton>
          </HBar>
        </Workspace>

        <StatusBar>
          <Counters $wide={170}>
            <Counter><Latin>1 </Latin>页</Counter>
            <Counter><Latin>1 </Latin>节</Counter>
            <Counter $short><Latin>1/1</Latin></Counter>
          </Counters>
          <Panel $wide={218}>
            <span>位置<Latin> 3</Latin>厘米</span>
            <Spacer />
            <span><Latin>2 </Latin>行</span>
            <span><Latin>17 </Latin>列</span>
          </Panel>
          <Panel $dim>录制</Panel>
          <Panel $dim>修订</Panel>
          <Panel $dim>扩展</Panel>
          <Panel $dim $last>改</Panel>
          <Icon w={14} h={16}>
            <path d="M10 4h2v2h-2zM6 8h2v2H6zM10 8h2v2h-2zM2 12h2v2H2zM6 12h2v2H6zM10 12h2v2h-2z" fill="#b8b4a2" />
          </Icon>
        </StatusBar>
      </Window>
    </Desktop>
  );
}
